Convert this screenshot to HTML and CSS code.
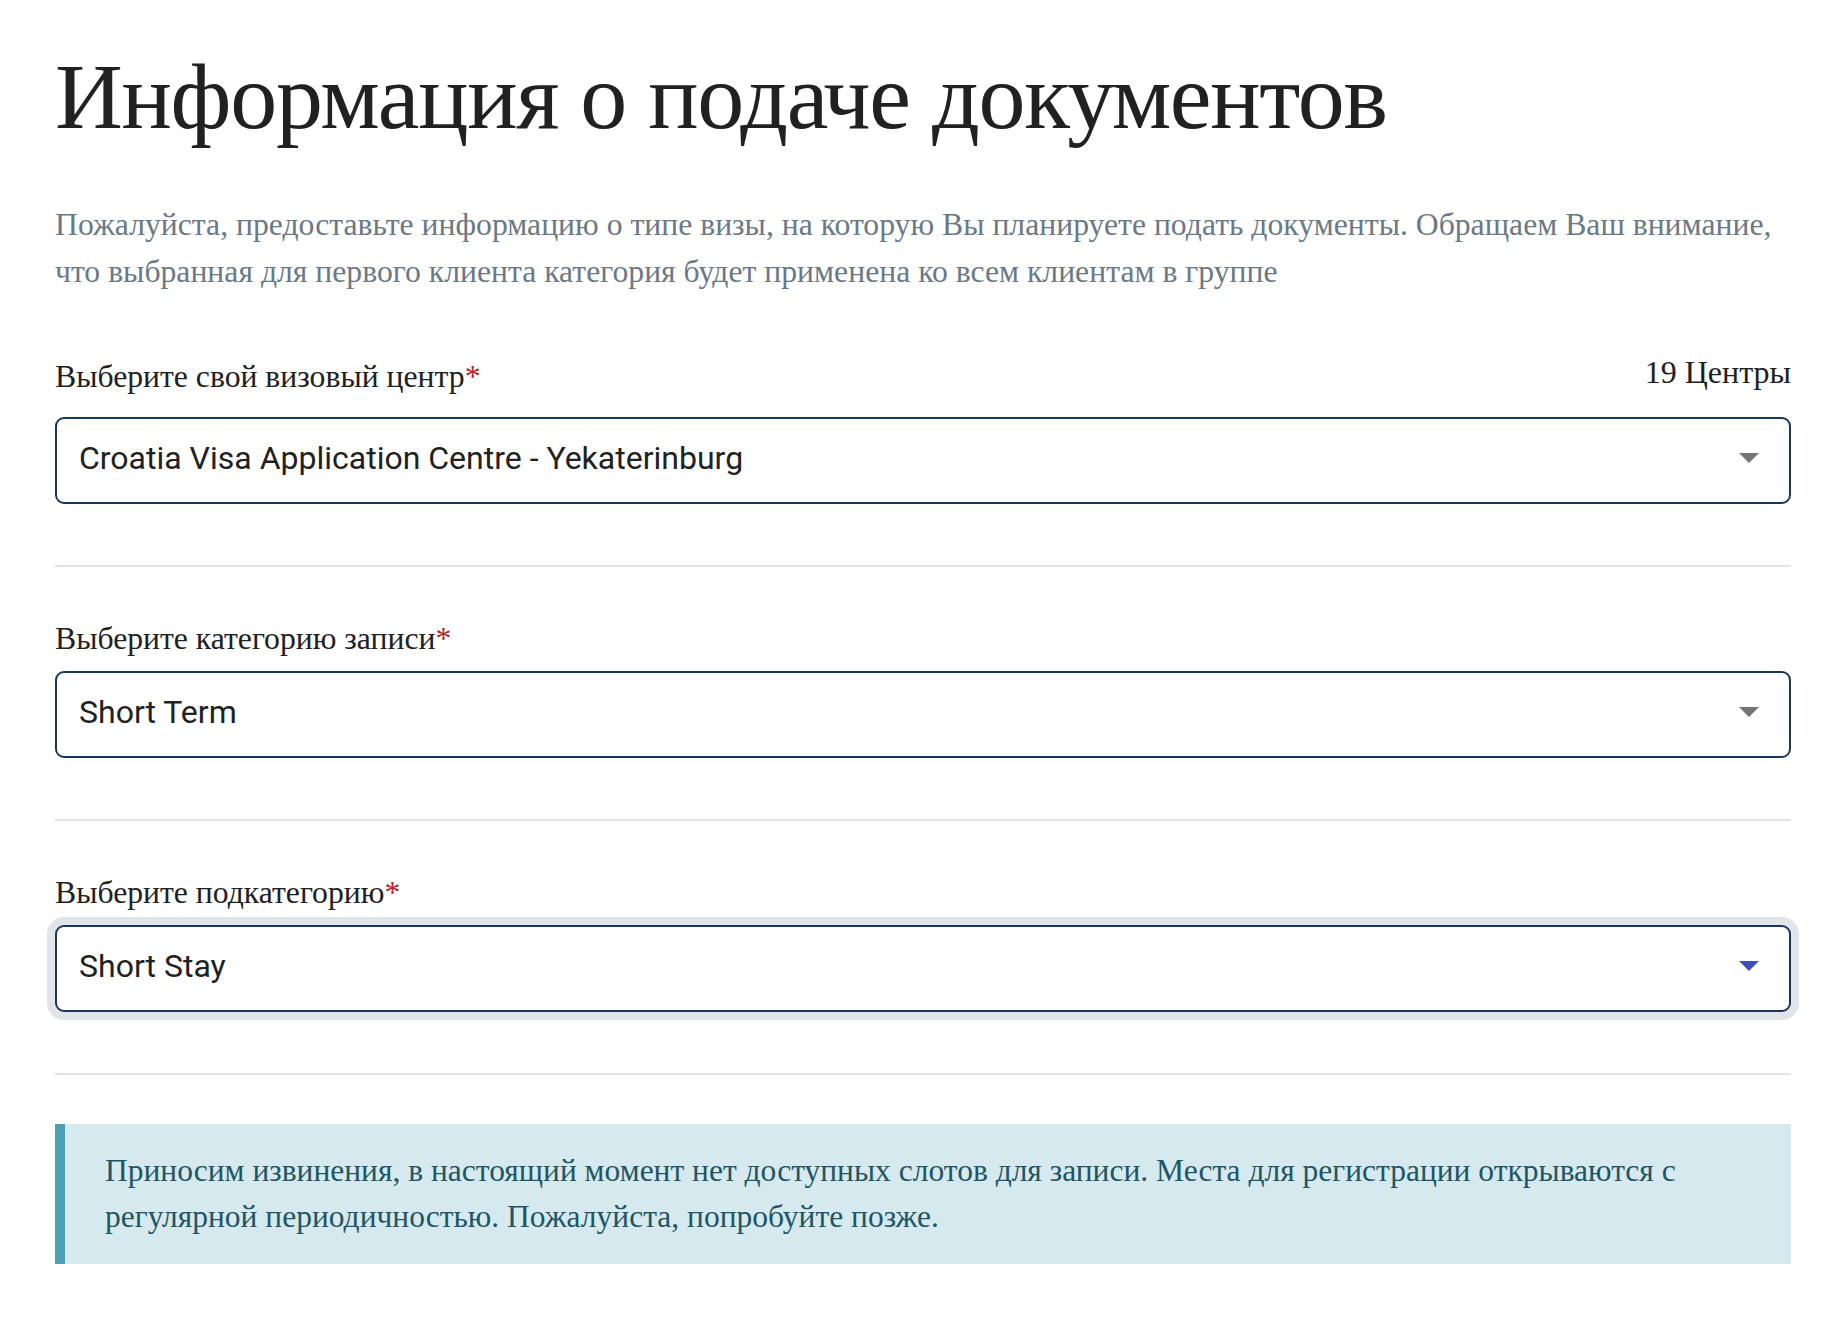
FILE: index.html
```html
<!DOCTYPE html>
<html lang="ru">
<head>
<meta charset="utf-8">
<title>Информация о подаче документов</title>
<link rel="stylesheet" href="styles.css">
</head>
<body>
<main class="page">
  <h1 class="title">Информация о подаче документов</h1>
  <p class="lead">Пожалуйста, предоставьте информацию о типе визы, на которую Вы планируете подать документы. Обращаем Ваш внимание, что выбранная для первого клиента категория будет применена ко всем клиентам в группе</p>

  <section class="field">
    <div class="label-row label-row--count">
      <label class="label">Выберите свой визовый центр<span class="req">*</span></label>
      <span class="count">19 Центры</span>
    </div>
    <div class="select">
      <span class="select-value">Croatia Visa Application Centre - Yekaterinburg</span>
      <span class="caret"></span>
    </div>
  </section>
  <hr class="divider">

  <section class="field">
    <div class="label-row">
      <label class="label">Выберите категорию записи<span class="req">*</span></label>
    </div>
    <div class="select">
      <span class="select-value">Short Term</span>
      <span class="caret"></span>
    </div>
  </section>
  <hr class="divider">

  <section class="field">
    <div class="label-row">
      <label class="label">Выберите подкатегорию<span class="req">*</span></label>
    </div>
    <div class="select select--focused">
      <span class="select-value">Short Stay</span>
      <span class="caret caret--active"></span>
    </div>
  </section>
  <hr class="divider">

  <div class="alert">Приносим извинения, в настоящий момент нет доступных слотов для записи. Места для регистрации открываются с регулярной периодичностью. Пожалуйста, попробуйте позже.</div>
</main>
</body>
</html>
```

FILE: styles.css
```css
html, body {
  margin: 0;
  padding: 0;
  background: #ffffff;
}

body {
  font-family: "Liberation Serif", "Times New Roman", serif;
  color: #212121;
}

.page {
  width: 1736px;
  margin: 0 auto;
  padding-top: 40px;
}

.title {
  margin: 0;
  font-size: 94px;
  line-height: 1.2;
  letter-spacing: -1.3px;
  font-weight: normal;
  color: #212121;
}

.lead {
  margin: 48px 0 0;
  font-size: 31.7px;
  line-height: 47px;
  color: #6b7886;
}

.field {
  margin-top: 53px;
}

.lead + .field {
  margin-top: 58px;
}

.label-row {
  display: flex;
  justify-content: space-between;
  align-items: flex-end;
  margin-bottom: 13px;
}

.label-row--count {
  margin-bottom: 21px;
}

.label {
  font-size: 31.7px;
  line-height: 38px;
  color: #212121;
}

.req {
  color: #b01d25;
}

.count {
  font-size: 32px;
  line-height: 38px;
  margin-bottom: 5px;
  color: #212121;
}

.select {
  box-sizing: border-box;
  height: 87px;
  display: flex;
  align-items: center;
  justify-content: space-between;
  padding: 0 30px 5px 22px;
  border: 2px solid #1b365d;
  border-radius: 9px;
  background: #ffffff;
  font-family: Roboto, "Liberation Sans", sans-serif;
  font-size: 32px;
  color: #212121;
}

.select--focused {
  box-shadow: 0 0 0 8px #e1e4e9;
}

.caret {
  width: 0;
  height: 0;
  border-left: 10px solid transparent;
  border-right: 10px solid transparent;
  border-top: 10px solid #757575;
}

.caret--active {
  border-top-color: #3f51b5;
}

.divider {
  margin: 61px 0 0;
  border: 0;
  height: 2px;
  background: #e1e4e8;
}

.alert {
  margin-top: 49px;
  padding: 24px 40px 24px 40px;
  border-left: 10px solid #4ba0b5;
  background: #d5e9ef;
  color: #1f5663;
  font-size: 31.5px;
  line-height: 46px;
}
```
